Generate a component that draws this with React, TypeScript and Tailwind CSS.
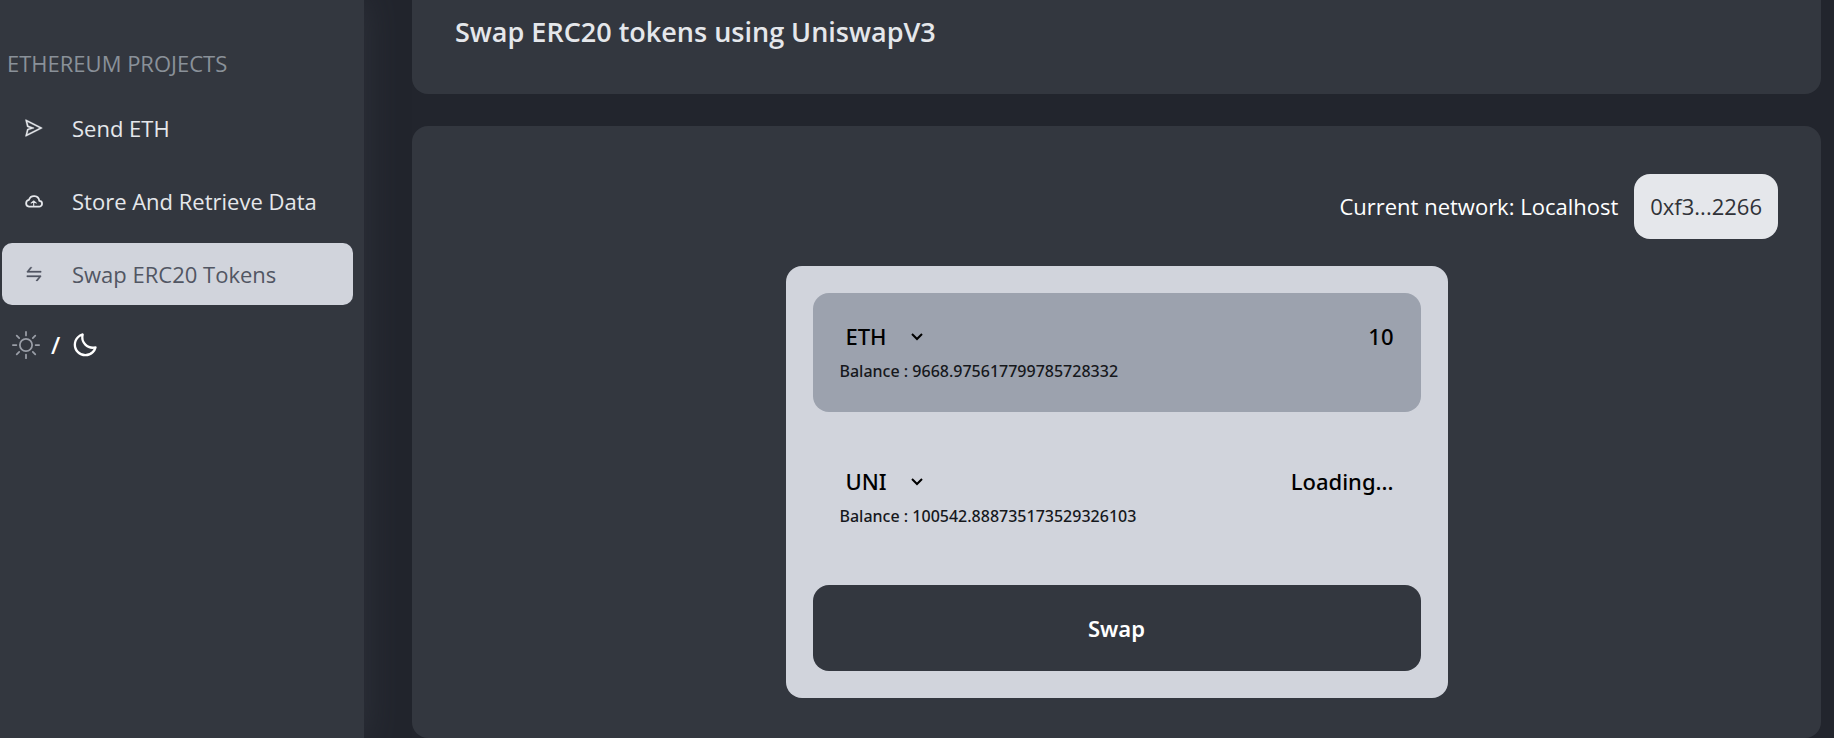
import { useState } from "react";
import { AiOutlineSend, AiOutlineSwap } from "react-icons/ai";
import { BiChevronDown, BiMoon } from "react-icons/bi";
import { BsSun } from "react-icons/bs";

function SendIcon() {
  return <AiOutlineSend className="size-5" stroke="currentColor" strokeWidth={14} />;
}

function SwapIcon() {
  return <AiOutlineSwap className="size-5" stroke="currentColor" strokeWidth={14} />;
}

function CloudUploadIcon() {
  return (
    <svg viewBox="0 0 20 20" className="size-5" fill="none" stroke="currentColor" strokeLinejoin="round" aria-hidden="true">
      <path strokeWidth="1.8" d="M5 15.6H15a2.9 2.9 0 0 0 .3-5.8A5.3 5.3 0 0 0 5 8.8 3.45 3.45 0 0 0 5 15.6z" />
      <path strokeWidth="1.1" d="M9.7 15V10.2M6.8 12.4l2.9-2.4 2.9 2.4" />
    </svg>
  );
}

const links = [
  { label: "Send ETH", Icon: SendIcon, active: false },
  { label: "Store And Retrieve Data", Icon: CloudUploadIcon, active: false },
  { label: "Swap ERC20 Tokens", Icon: SwapIcon, active: true },
];

function Sidebar() {
  return (
    <aside className="w-[364px] shrink-0 bg-[#33373f] px-[2px] pt-11 shadow-[0_0_32px_rgba(60,64,74,0.5)]">
      <h2 className="px-[5px] text-[22px] leading-[38px] text-[#8a9199]">ETHEREUM PROJECTS</h2>
      <nav className="mt-[15px] mr-[9px] flex flex-col gap-[11px]">
        {links.map(({ label, Icon, active }) => (
          <a
            key={label}
            href="#"
            className={
              active
                ? "flex h-[62px] items-center gap-7 rounded-[10px] bg-[#d1d4dc] pl-[22px] text-[22px] text-[#515663]"
                : "flex h-[62px] items-center gap-7 rounded-[10px] pl-[22px] text-[22px] text-[#e5e7eb]"
            }
          >
            <Icon />
            {label}
          </a>
        ))}
      </nav>
      <div className="mt-6 flex h-8 items-center pl-[10px] text-2xl font-medium text-white">
        <button type="button" aria-label="Light mode" className="text-[#9a9ea7]">
          <BsSun className="size-7" />
        </button>
        <span className="px-[11px] font-['Noto_Sans',sans-serif]">/</span>
        <button type="button" aria-label="Dark mode">
          <BiMoon className="size-7" />
        </button>
      </div>
    </aside>
  );
}

function TokenSelect({ label, initial }: { label: string; initial: string }) {
  const [token, setToken] = useState(initial);
  return (
    <span className="relative inline-flex items-center">
      <select
        aria-label={label}
        value={token}
        onChange={(e) => setToken(e.target.value)}
        className="field-sizing-content appearance-none bg-transparent pr-[42px] pl-[6px] text-[22px] leading-8 font-medium text-black"
      >
        <option>ETH</option>
        <option>UNI</option>
      </select>
      <BiChevronDown className="pointer-events-none absolute right-0 size-6" />
    </span>
  );
}

export default function App() {
  const [amount, setAmount] = useState("10");
  return (
    <div className="flex min-h-screen bg-[#22252d] font-['Open_Sans','Noto_Sans',sans-serif]">
      <Sidebar />
      <main className="flex min-w-0 flex-1 flex-col gap-8 pr-[13px] pl-12">
        <header className="rounded-b-2xl bg-[#33373f] px-[43px] pt-3 pb-[42px]">
          <h1 className="text-[27px] leading-10 font-semibold text-[#e5e7eb]">Swap ERC20 tokens using UniswapV3</h1>
        </header>
        <section className="flex-1 rounded-2xl bg-[#33373f] px-[43px] pt-12 pb-10">
          <div className="flex items-center justify-end gap-4 text-[22px] text-white">
            <p>Current network: Localhost</p>
            <button type="button" className="h-[65px] rounded-2xl bg-[#e5e7eb] px-4 text-[#303238]">
              0xf3...2266
            </button>
          </div>
          <form
            className="mx-auto mt-[27px] w-full max-w-[662px] rounded-2xl bg-[#d1d4dc] p-[27px] font-['Noto_Sans',sans-serif] text-black"
            onSubmit={(e) => e.preventDefault()}
          >
            <div className="flex h-[119px] justify-between rounded-2xl bg-[#9ca2ae] px-[27px] pt-[27px]">
              <div>
                <TokenSelect label="Token to sell" initial="ETH" />
                <p className="text-base leading-[38px] font-medium text-[#16181c]">Balance : 9668.975617799785728332</p>
              </div>
              <input
                aria-label="Amount"
                value={amount}
                onChange={(e) => setAmount(e.target.value)}
                className="h-8 w-40 bg-transparent text-right text-[22px] font-medium outline-none"
              />
            </div>
            <div className="mt-[26px] flex h-[119px] justify-between px-[27px] pt-[27px]">
              <div>
                <TokenSelect label="Token to buy" initial="UNI" />
                <p className="text-base leading-[38px] font-medium text-[#16181c]">Balance : 100542.888735173529326103</p>
              </div>
              <output className="text-[22px] leading-8 font-medium">Loading...</output>
            </div>
            <button
              type="submit"
              className="mt-7 h-[86px] w-full rounded-2xl bg-[#33373f] text-[22px] font-semibold text-white"
            >
              Swap
            </button>
          </form>
        </section>
      </main>
    </div>
  );
}
